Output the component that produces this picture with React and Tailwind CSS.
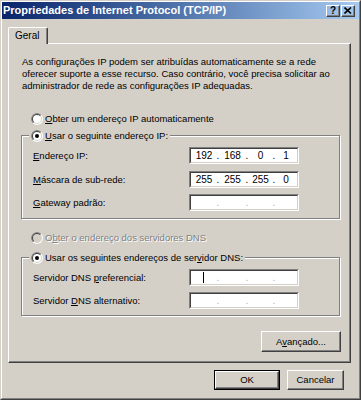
import React, { useId } from "react";

function Radio({ checked, disabled }) {
  const id = useId().replace(/:/g, "");
  return (
    <svg width="12" height="12" viewBox="0 0 12 12" className="shrink-0">
      <defs>
        <clipPath id={"tl" + id}>
          <polygon points="0,0 12,0 0,12" />
        </clipPath>
      </defs>
      <circle cx="6" cy="6" r="6" fill="#ffffff" />
      <circle cx="6" cy="6" r="6" fill="#808080" clipPath={`url(#tl${id})`} />
      <circle cx="6" cy="6" r="5" fill="#D4D0C8" />
      <circle cx="6" cy="6" r="5" fill="#404040" clipPath={`url(#tl${id})`} />
      <circle cx="6" cy="6" r="4" fill={disabled ? "#D4D0C8" : "#ffffff"} />
      {checked && <circle cx="6" cy="6" r="2" fill="#000000" />}
    </svg>
  );
}

function Sunken({ children, className = "" }) {
  return (
    <div className={"border border-t-[#808080] border-l-[#808080] border-b-white border-r-white " + className}>
      <div className="h-full border border-t-[#404040] border-l-[#404040] border-b-[#D4D0C8] border-r-[#D4D0C8] bg-white">
        {children}
      </div>
    </div>
  );
}

function IpField({ values, caret }) {
  const widths = ["w-[26px]", "w-[27px]", "w-[25px]", "w-[22px]"];
  const empty = !values;
  return (
    <Sunken className="w-[110px] h-[17px]">
      <div className="flex h-full items-center text-[10px] leading-[13px]">
        {widths.map((w, i) => (
          <React.Fragment key={i}>
            <div className={w + " relative flex h-full items-center justify-center"}>
              {values ? values[i] : ""}
              {caret && i === 0 && <div className="absolute left-[12px] top-[1px] h-[11px] w-px bg-black" />}
            </div>
            {i < 3 && (
              <div className={"w-[2px] flex justify-center " + (empty ? "text-[#b0b0b0]" : "text-black")}>.</div>
            )}
          </React.Fragment>
        ))}
      </div>
    </Sunken>
  );
}

function Raised({ children, className = "", isDefault }) {
  const inner = (
    <div className="h-full border border-t-white border-l-white border-b-[#404040] border-r-[#404040]">
      <div className="h-full flex items-center justify-center shadow-[inset_-1px_-1px_0_#808080]">{children}</div>
    </div>
  );
  if (isDefault) {
    return <div className={"border border-black " + className}>{inner}</div>;
  }
  return <div className={className}>{inner}</div>;
}

function Row({ label, children, className = "" }) {
  return (
    <div className={"flex items-center h-[17px] " + className}>
      <div className="w-[156px] whitespace-nowrap">{label}</div>
      {children}
    </div>
  );
}

const etched = "border border-[#808080] shadow-[inset_1px_1px_0_#ffffff,1px_1px_0_#ffffff]";

export default function App() {
  return (
    <div className="w-[361px] h-[400px] bg-[#D4D0C8] font-['Liberation_Sans',Arial,sans-serif] text-[9.5px] leading-[12px] text-black border border-t-[#D4D0C8] border-l-[#D4D0C8] border-r-[#404040] border-b-[#404040]">
      <div className="h-full flex flex-col border border-t-white border-l-white border-r-[#808080] border-b-[#808080]">
        {/* Title bar */}
        <div className="h-[17px] flex items-center justify-between bg-gradient-to-r from-[#0A246A] to-[#A6CAF0] pl-[1px] pr-[4px]">
          <span className="text-white font-bold text-[11px] leading-[13px] whitespace-nowrap">
            Propriedades de Internet Protocol (TCP/IP)
          </span>
          <div className="flex gap-[1px]">
            <Raised className="w-[14px] h-[12px]">
              <span className="font-bold text-[10px] leading-[10px]">?</span>
            </Raised>
            <Raised className="w-[14px] h-[12px]">
              <svg width="8" height="7" viewBox="0 0 8 7">
                <path d="M0.5 0.5 L7 6.5 M7 0.5 L0.5 6.5" stroke="#000" strokeWidth="1.6" />
              </svg>
            </Raised>
          </div>
        </div>

        {/* Tab */}
        <div className="ml-[6px] mt-[8px] relative z-10 -mb-[1px] w-[40px] h-[17px] bg-[#D4D0C8] border-t border-l border-r border-t-white border-l-white border-r-[#404040] rounded-tl-[2px] rounded-tr-[2px] shadow-[inset_-1px_0_0_#808080] flex items-center pl-[6px]">
          <span className="text-[10px]">Geral</span>
        </div>

        {/* Panel */}
        <div className="ml-[6px] w-[343px] h-[320px] border border-t-white border-l-white border-r-[#404040] border-b-[#404040] shadow-[inset_-1px_-1px_0_#808080] flex flex-col">
          <p className="mt-[12px] pl-[13px] whitespace-nowrap leading-[12px]">
            As configurações IP podem ser atribuídas automaticamente se a rede
            <br />
            oferecer suporte a esse recurso. Caso contrário, você precisa solicitar ao
            <br />
            administrador de rede as configurações IP adequadas.
          </p>

          <div className="mt-[20px] ml-[22px] h-[13px] flex items-center gap-[2px]">
            <Radio />
            <span>
              <u>O</u>bter um endereço IP automaticamente
            </span>
          </div>

          <fieldset className={"mt-[4px] ml-[12px] w-[319px] p-0 " + etched}>
            <legend className="ml-[7px] px-[2px] h-[13px] bg-[#D4D0C8] flex items-center gap-[2px]">
              <Radio checked />
              <span>
                <u>U</u>sar o seguinte endereço IP:
              </span>
            </legend>
            <div className="pl-[11px] pb-[7px]">
              <Row className="mt-[5px]" label={<><u>E</u>ndereço IP:</>}>
                <IpField values={["192", "168", "0", "1"]} />
              </Row>
              <Row className="mt-[7px]" label={<><u>M</u>áscara de sub-rede:</>}>
                <IpField values={["255", "255", "255", "0"]} />
              </Row>
              <Row className="mt-[6px]" label={<><u>G</u>ateway padrão:</>}>
                <IpField />
              </Row>
            </div>
          </fieldset>

          <div className="mt-[12px] ml-[22px] h-[13px] flex items-center gap-[2px]">
            <Radio disabled />
            <span className="text-[#808080] [text-shadow:1px_1px_0_#ffffff]">
              O<u>b</u>ter o endereço dos servidores DNS
            </span>
          </div>

          <fieldset className={"mt-[7px] ml-[12px] w-[319px] p-0 " + etched}>
            <legend className="ml-[7px] px-[2px] h-[13px] bg-[#D4D0C8] flex items-center gap-[2px]">
              <Radio checked />
              <span>
                Usar os seguintes endereços de ser<u>v</u>idor DNS:
              </span>
            </legend>
            <div className="pl-[11px] pb-[6px]">
              <Row className="mt-[5px]" label={<>Servidor DNS <u>p</u>referencial:</>}>
                <IpField caret />
              </Row>
              <Row className="mt-[6px]" label={<>Servidor <u>D</u>NS alternativo:</>}>
                <IpField />
              </Row>
            </div>
          </fieldset>

          <div className="mt-[15px] mr-[9px] self-end">
            <Raised className="w-[80px] h-[21px]">
              <span>
                A<u>v</u>ançado...
              </span>
            </Raised>
          </div>
        </div>

        {/* Bottom buttons */}
        <div className="mt-[7px] mr-[15px] self-end flex gap-[7px]">
          <Raised isDefault className="w-[66px] h-[20px]">
            <span>OK</span>
          </Raised>
          <Raised className="w-[57px] h-[20px]">
            <span>Cancelar</span>
          </Raised>
        </div>
      </div>
    </div>
  );
}
